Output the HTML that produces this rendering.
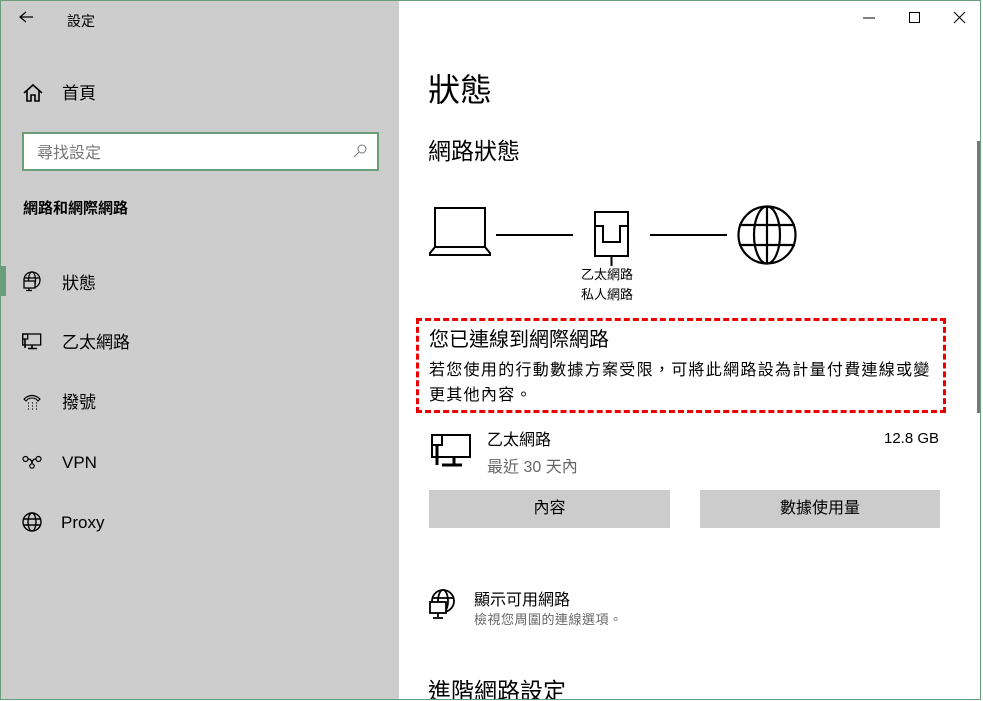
<!DOCTYPE html>
<html><head><meta charset="utf-8"><style>
*{margin:0;padding:0;box-sizing:border-box}
body{width:983px;height:701px;background:#fff;position:relative;overflow:hidden;font-family:"Liberation Sans","Noto Sans CJK TC",sans-serif;color:#000}
.win{position:absolute;left:0;top:0;width:981px;height:700px;border:1px solid #6a9e7a;overflow:hidden;background:#fff}
.side{position:absolute;left:0;top:0;width:398px;height:700px;background:#cdcdcd}
.a{position:absolute;white-space:nowrap}
svg{position:absolute;overflow:visible}
.nav{font-size:17px}
</style></head><body>
<div class="win">
<div class="side">
 <svg style="left:18px;top:10px" width="14" height="12"><path d="M7 1L1 6L7 11M1 6H14" fill="none" stroke="#000" stroke-width="1.2"/></svg>
 <div class="a" style="left:66px;top:10px;font-size:14px">設定</div>
 <svg style="left:22px;top:82px" width="20" height="20"><path d="M1 10L10 2L19 10M4 8V18H8V12H12V18H16V8" fill="none" stroke="#000" stroke-width="1.6"/></svg>
 <div class="a nav" style="left:61px;top:78px">首頁</div>
 <div class="a" style="left:21px;top:131px;width:357px;height:39px;background:#fff;border:2px solid #6a9e7a"></div>
 <div class="a" style="left:36px;top:138px;font-size:16px;color:#777">尋找設定</div>
 <svg style="left:352px;top:143px" width="14" height="14"><circle cx="9" cy="5" r="4" fill="none" stroke="#777"/><path d="M6 8L1 13" stroke="#777"/></svg>
 <div class="a" style="left:22px;top:196px;font-size:15px;font-weight:bold">網路和網際網路</div>
 <div class="a" style="left:0;top:265px;width:5px;height:30px;background:#6a9e7a"></div>
 <svg style="left:21px;top:270px" width="20" height="20"><circle cx="10" cy="9" r="8" fill="none" stroke="#000" stroke-width="1.3"/><ellipse cx="10" cy="9" rx="3.5" ry="8" fill="none" stroke="#000" stroke-width="1.3"/><path d="M2 7H18" stroke="#000" stroke-width="1.3"/><rect x="2" y="10" width="11" height="7" fill="#cdcdcd" stroke="#000" stroke-width="1.3"/><path d="M7 17V19M4 19.5H10" stroke="#000" stroke-width="1.3"/></svg>
 <div class="a nav" style="left:61px;top:268px">狀態</div>
 <svg style="left:21px;top:332px" width="20" height="18"><rect x="0.7" y="1" width="18" height="11" fill="none" stroke="#000" stroke-width="1.3"/><rect x="0.7" y="1" width="5" height="5" fill="none" stroke="#000" stroke-width="1.3"/><path d="M3 6V15M10 12V15M6 15.5H15" stroke="#000" stroke-width="1.6"/></svg>
 <div class="a nav" style="left:61px;top:327px">乙太網路</div>
 <svg style="left:22px;top:393px" width="18" height="16"><path d="M1 5Q9 -2 17 5L15 7L13 5Q9 3 5 5L3 7Z" fill="none" stroke="#000" stroke-width="1.1"/><path d="M5 9h1M9 9h1M13 9h1M5 12h1M9 12h1M13 12h1M5 15h1M9 15h1M13 15h1" stroke="#000" stroke-width="1.2"/></svg>
 <div class="a nav" style="left:61px;top:387px">撥號</div>
 <svg style="left:21px;top:454px" width="20" height="14"><circle cx="3.5" cy="4" r="2.5" fill="none" stroke="#000" stroke-width="1.2"/><circle cx="16.5" cy="4" r="2.5" fill="none" stroke="#000" stroke-width="1.2"/><circle cx="10" cy="11" r="2.2" fill="none" stroke="#000" stroke-width="1.2"/><path d="M6 4Q10 4 10 9M14 4Q10 4 10 9" fill="none" stroke="#000" stroke-width="1.2"/></svg>
 <div class="a nav" style="left:61px;top:452px">VPN</div>
 <svg style="left:21px;top:511px" width="20" height="20"><circle cx="10" cy="10" r="9" fill="none" stroke="#000" stroke-width="1.4"/><ellipse cx="10" cy="10" rx="4" ry="9" fill="none" stroke="#000" stroke-width="1.4"/><path d="M1 7H19M1 13H19" stroke="#000" stroke-width="1.4"/></svg>
 <div class="a nav" style="left:60px;top:512px">Proxy</div>
</div>
<svg style="left:862px;top:16px" width="12" height="2"><path d="M0 1H12" stroke="#000"/></svg>
<svg style="left:908px;top:11px" width="11" height="11"><rect x="0.5" y="0.5" width="10" height="10" fill="none" stroke="#000"/></svg>
<svg style="left:953px;top:11px" width="11" height="11"><path d="M0 0L11 11M11 0L0 11" stroke="#000"/></svg>
<div class="a" style="left:976px;top:140px;width:3px;height:272px;background:#777"></div>
<div class="a" style="left:427px;top:64px;font-size:32px">狀態</div>
<div class="a" style="left:427px;top:131px;font-size:23px">網路狀態</div>
<svg style="left:428px;top:205px" width="62" height="50"><path d="M6 2H56V41H6Z" fill="none" stroke="#000" stroke-width="2"/><path d="M6 41L1 47V49H61V47L56 41" fill="none" stroke="#000" stroke-width="2"/></svg>
<div class="a" style="left:495px;top:233px;width:77px;height:2px;background:#000"></div>
<svg style="left:593px;top:210px" width="36" height="55"><rect x="1" y="1" width="33" height="44" fill="none" stroke="#000" stroke-width="2"/><path d="M1 15H9V31H26V15H34" fill="none" stroke="#000" stroke-width="2"/><path d="M17.5 45V55" stroke="#000" stroke-width="2"/></svg>
<div class="a" style="left:649px;top:233px;width:77px;height:2px;background:#000"></div>
<svg style="left:736px;top:204px" width="60" height="60"><circle cx="30" cy="30" r="28.5" fill="none" stroke="#000" stroke-width="2.2"/><ellipse cx="30" cy="30" rx="13" ry="28.5" fill="none" stroke="#000" stroke-width="2.2"/><path d="M2 20H58M2 40H58M30 2V58" stroke="#000" stroke-width="2.2"/></svg>
<div class="a" style="left:580px;top:264px;font-size:13px;line-height:20px;text-align:center">乙太網路<br>私人網路</div>
<div class="a" style="left:415px;top:317px;width:530px;height:95px;border:3px dashed #e00"></div>
<div class="a" style="left:428px;top:322px;font-size:20px">您已連線到網際網路</div>
<div class="a" style="left:428px;top:357px;font-size:16px;letter-spacing:1.3px;line-height:25px">若您使用的行動數據方案受限，可將此網路設為計量付費連線或變<br>更其他內容。</div>
<svg style="left:430px;top:433px" width="40" height="32"><rect x="1" y="1" width="38" height="22" fill="none" stroke="#000" stroke-width="2"/><rect x="1" y="1" width="10" height="10" fill="none" stroke="#000" stroke-width="2"/><path d="M6 11V31M23 23V31M11 31H31" stroke="#000" stroke-width="3"/></svg>
<div class="a" style="left:486px;top:425px;font-size:16px">乙太網路</div>
<div class="a" style="left:486px;top:452px;font-size:16px;color:#666">最近 30 天內</div>
<div class="a" style="left:883px;top:429px;font-size:15px">12.8 GB</div>
<div class="a" style="left:428px;top:489px;width:241px;height:38px;background:#ccc;font-size:16px;text-align:center;line-height:38px">內容</div>
<div class="a" style="left:699px;top:489px;width:240px;height:38px;background:#ccc;font-size:16px;text-align:center;line-height:38px">數據使用量</div>
<svg style="left:428px;top:588px" width="28" height="32"><circle cx="14" cy="12" r="11" fill="none" stroke="#000" stroke-width="1.8"/><ellipse cx="14" cy="12" rx="5" ry="11" fill="none" stroke="#000" stroke-width="1.8"/><path d="M3 9H25" stroke="#000" stroke-width="1.8"/><rect x="1" y="13" width="16" height="11" fill="#fff" stroke="#000" stroke-width="1.8"/><path d="M9 24V28M4 29H14" stroke="#000" stroke-width="1.8"/></svg>
<div class="a" style="left:473px;top:585px;font-size:16px">顯示可用網路</div>
<div class="a" style="left:473px;top:608px;font-size:13px;color:#666;letter-spacing:0.5px">檢視您周圍的連線選項。</div>
<div class="a" style="left:427px;top:671px;font-size:23px">進階網路設定</div>
</div>
</body></html>
